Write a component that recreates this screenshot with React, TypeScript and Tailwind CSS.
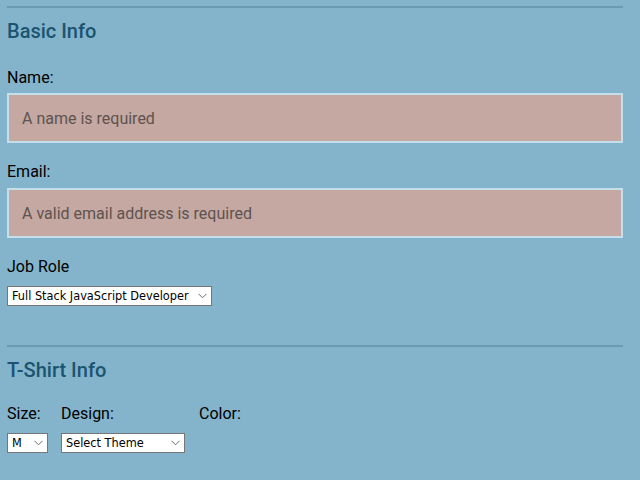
import React from "react";

function Chevron() {
  return (
    <svg width="9" height="6" viewBox="0 0 9 6" className="pointer-events-none absolute right-[5px] top-[7px]">
      <path d="M0.5 0.8 L4.5 4.8 L8.5 0.8" fill="none" stroke="#6b6b6b" strokeWidth="1" />
    </svg>
  );
}

function Select({ value, width }: { value: string; width: string }) {
  return (
    <div className={`relative ${width} h-[20px]`}>
      <select
        defaultValue={value}
        className="block h-[20px] w-full appearance-none border border-[#767676] bg-white pl-[4px] text-[12.6px] leading-[18px] text-black outline-none"
        style={{ fontFamily: '"DejaVu Sans Condensed", "DejaVu Sans", sans-serif' }}
      >
        <option>{value}</option>
      </select>
      <Chevron />
    </div>
  );
}

export default function App() {
  return (
    <div
      className="min-h-[480px] w-full bg-[#84b4cb] pl-[7px] pr-[17px] pt-[6px]"
      style={{ fontFamily: 'Roboto, "Liberation Sans", sans-serif' }}
    >
      <div className="h-[2px] bg-[#6a9bb4]" />
      <h2 className="mt-[11px] text-[20px] font-medium leading-[24px] text-[#1b5470]">Basic Info</h2>

      <label className="mt-[23px] block text-[16px] leading-[24px] text-black">Name:</label>
      <input
        placeholder="A name is required"
        className="mt-[3px] block h-[50px] w-full border-2 border-[#c3dfeb] bg-[#c4a8a1] px-[13px] text-[16px] outline-none placeholder:text-[#5e5350]"
      />

      <label className="mt-[17px] block text-[16px] leading-[24px] text-black">Email:</label>
      <input
        placeholder="A valid email address is required"
        className="mt-[4px] block h-[50px] w-full border-2 border-[#c3dfeb] bg-[#c4a8a1] px-[13px] text-[16px] outline-none placeholder:text-[#5e5350]"
      />

      <label className="mt-[17px] block text-[16px] leading-[24px] text-black">Job Role</label>
      <div className="mt-[7px]">
        <Select value="Full Stack JavaScript Developer" width="w-[205px]" />
      </div>

      <div className="mt-[39px] h-[2px] bg-[#6a9bb4]" />
      <h2 className="mt-[11px] text-[20px] font-medium leading-[24px] text-[#1b5470]">T-Shirt Info</h2>

      <div className="mt-[20px] flex">
        <div className="mr-[13px] flex flex-col">
          <label className="text-[16px] leading-[24px] text-black">Size:</label>
          <div className="mt-[7px]">
            <Select value="M" width="w-[41px]" />
          </div>
        </div>
        <div className="mr-[14px] flex flex-col">
          <label className="text-[16px] leading-[24px] text-black">Design:</label>
          <div className="mt-[7px]">
            <Select value="Select Theme" width="w-[124px]" />
          </div>
        </div>
        <div className="flex flex-col">
          <label className="text-[16px] leading-[24px] text-black">Color:</label>
        </div>
      </div>
    </div>
  );
}
